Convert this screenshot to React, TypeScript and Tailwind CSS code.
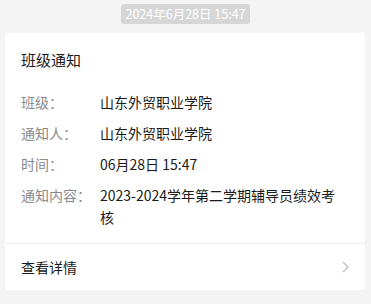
import React from "react";

const rows: { label: string; value: string }[] = [
  { label: "班级：", value: "山东外贸职业学院" },
  { label: "通知人：", value: "山东外贸职业学院" },
  { label: "时间：", value: "06月28日 15:47" },
  { label: "通知内容：", value: "2023-2024学年第二学期辅导员绩效考核" },
];

export default function App() {
  return (
    <div
      className="min-h-screen bg-[#f4f4f4] pt-[4px]"
      style={{ fontFamily: '"Noto Sans CJK SC", "Noto Sans", sans-serif' }}
    >
      <div className="flex justify-center">
        <span className="bg-[#d6d6d6] text-white text-[12.5px] leading-[20px] px-[4px] rounded-[3px]">
          2024年6月28日 15:47
        </span>
      </div>
      <div className="mt-[9px] ml-[5px] w-[360px] bg-white rounded-[4px]">
        <div className="px-4 pt-[16px] pb-[15px]">
          <div className="text-[15px] leading-[22px] text-[#1a1a1a]">班级通知</div>
          <div className="mt-[20px] flex flex-col gap-[9px]">
            {rows.map((r) => (
              <div key={r.label} className="flex text-[14px] leading-[22px]">
                <div className="w-[79px] shrink-0 text-[#8a8a8a]">{r.label}</div>
                <div className="flex-1 min-w-0 text-[#1a1a1a]">{r.value}</div>
              </div>
            ))}
          </div>
        </div>
        <div className="h-[47px] border-t border-[#ececec] flex items-center justify-between pl-4 pr-4">
          <span className="text-[14px] text-[#1a1a1a]">查看详情</span>
          <svg width="7" height="12" viewBox="0 0 7 12" fill="none">
            <polyline points="1,1 6,6 1,11" stroke="#bdbdbd" strokeWidth="1.2" />
          </svg>
        </div>
      </div>
    </div>
  );
}
